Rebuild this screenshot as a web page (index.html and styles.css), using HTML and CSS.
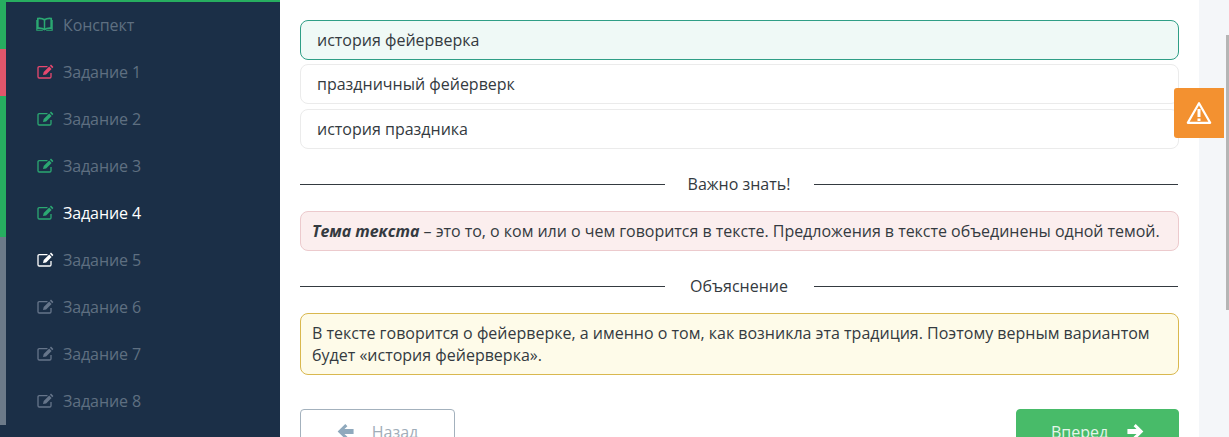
FILE: index.html
```html
<!DOCTYPE html>
<html lang="ru">
<head>
    <meta charset="UTF-8">
    <title>Задание 4</title>
    <link rel="stylesheet" href="styles.css">
</head>
<body>
    <svg class="icon-defs" width="0" height="0">
        <symbol id="icon-edit" viewBox="0 0 17 15">
            <path d="M10.500 2.700H2.300C1.500 2.700 1 3.200 1 4v8.700c0 .8.500 1.300 1.300 1.300h10.400c.8 0 1.300-.5 1.300-1.300V9" fill="none" stroke="currentColor" stroke-width="1.300"/>
            <path d="M14 .6l2.400 2.400-1.100 1.200-2.400-2.400zM12.200 2.500l2.400 2.400-5.500 5.500-3.100.7.700-3.100z" fill="currentColor"/>
        </symbol>
        <symbol id="icon-book" viewBox="0 0 17 15">
            <path d="M1.800 1.500c2.700-.3 5 .1 6.700 1.300 1.700-1.200 4-1.600 6.700-1.300v9.700c-2.700-.3-5 .1-6.700 1.300-1.700-1.200-4-1.600-6.700-1.300z" fill="none" stroke="currentColor" stroke-width="1.700"/>
            <path d="M8.500 3v10" stroke="currentColor" stroke-width="1.500"/>
            <path d="M.8 3v10.200h6M16.200 3v10.200h-6" fill="none" stroke="currentColor" stroke-width="1.100"/>
        </symbol>
    </svg>

    <div class="page">
        <nav class="sidebar">
            <a class="nav-item done"><svg class="nav-icon nav-book"><use href="#icon-book"/></svg>Конспект</a>
            <a class="nav-item wrong"><svg class="nav-icon"><use href="#icon-edit"/></svg>Задание 1</a>
            <a class="nav-item done"><svg class="nav-icon"><use href="#icon-edit"/></svg>Задание 2</a>
            <a class="nav-item done"><svg class="nav-icon"><use href="#icon-edit"/></svg>Задание 3</a>
            <a class="nav-item done current"><svg class="nav-icon"><use href="#icon-edit"/></svg>Задание 4</a>
            <a class="nav-item next"><svg class="nav-icon"><use href="#icon-edit"/></svg>Задание 5</a>
            <a class="nav-item"><svg class="nav-icon"><use href="#icon-edit"/></svg>Задание 6</a>
            <a class="nav-item"><svg class="nav-icon"><use href="#icon-edit"/></svg>Задание 7</a>
            <a class="nav-item"><svg class="nav-icon"><use href="#icon-edit"/></svg>Задание 8</a>
        </nav>

        <main class="content">
            <div class="options">
                <div class="option selected">история фейерверка</div>
                <div class="option">праздничный фейерверк</div>
                <div class="option">история праздника</div>
            </div>

            <div class="divider"><span>Важно знать!</span></div>
            <div class="note note-pink"><b>Тема текста</b> – это то, о ком или о чем говорится в тексте. Предложения в тексте объединены одной темой.</div>

            <div class="divider"><span>Объяснение</span></div>
            <div class="note note-yellow">В тексте говорится о фейерверке, а именно о том, как возникла эта традиция. Поэтому верным вариантом будет «история фейерверка».</div>

            <div class="buttons">
                <button class="btn btn-back">
                    <svg class="btn-icon" viewBox="0 0 16 14"><path d="M7.800 0L.6 7l7.200 7 2-2L7 9.300h8.600V4.700H7L9.800 2z" fill="currentColor"/></svg>
                    Назад
                </button>
                <button class="btn btn-next">
                    Вперед
                    <svg class="btn-icon" viewBox="0 0 16 14"><path d="M8.200 0l7.200 7-7.200 7-2-2L9 9.300H.4V4.700H9L6.200 2z" fill="currentColor"/></svg>
                </button>
            </div>
        </main>

        <div class="gutter"><div class="scroll-thumb"></div></div>
    </div>

    <a class="report-btn">
        <svg width="26" height="24" viewBox="0 0 26 24"><path d="M13 2.200L1.800 21.800h22.400z" fill="none" stroke="#fff" stroke-width="2.200" stroke-linejoin="round"/><path d="M13 8v8M13 17.400v2.600" stroke="#fff" stroke-width="3"/></svg>
    </a>
</body>
</html>
```

FILE: styles.css
```css
html, body {
    margin: 0;
    height: 437px;
    overflow: hidden;
}

body {
    font-family: "Open Sans", sans-serif;
    font-size: 16px;
    color: #343a40;
    background: #fff;
    position: relative;
}

.icon-defs {
    display: block;
    height: 0;
}

.page {
    display: flex;
    height: 437px;
}

/* Sidebar */
.sidebar {
    width: 280px;
    flex: none;
    box-sizing: border-box;
    background: #1b2f47;
    border-top: 2px solid #27ae60;
}
.nav-item {
    display: flex;
    align-items: center;
    height: 47px;
    box-sizing: border-box;
    padding-left: 31px;
    padding-bottom: 2px;
    border-left: 6px solid #6c7a89;
    color: #5f6f81;
    font-size: 16px;
    letter-spacing: -0.1px;
}
.nav-icon {
    width: 17px;
    height: 15px;
    margin-right: 9px;
    color: #66758a;
}
.nav-book {
    margin-left: -1px;
    margin-right: 10px;
}
.nav-item.done {
    border-left-color: #27ae60;
}
.nav-item.done .nav-icon {
    color: #2ba872;
}
.nav-item.wrong {
    border-left-color: #e0566b;
}
.nav-item.wrong .nav-icon {
    color: #e8486f;
}
.nav-item.current {
    color: #fff;
}
.nav-item.next .nav-icon {
    color: #fff;
}

/* Main column */
.content {
    width: 919px;
    flex: none;
    box-sizing: border-box;
    padding: 20px 20px 0;
}
.options {
    display: flex;
    flex-direction: column;
    gap: 4px;
}
.option {
    height: 40px;
    box-sizing: border-box;
    display: flex;
    align-items: center;
    padding: 0 16px;
    border: 1px solid #ebebeb;
    border-radius: 8px;
}
.option:last-child {
    margin-top: 1px;
}
.option.selected {
    background: #eff9f6;
    border-color: #2f9e86;
}

.divider {
    display: flex;
    align-items: center;
    height: 22px;
    margin-top: 24px;
    padding-right: 1px;
}
.divider::before,
.divider::after {
    content: "";
    height: 1px;
    flex: 1;
    background: #343a40;
}
.divider span {
    width: 149px;
    text-align: center;
}

.note {
    box-sizing: border-box;
    padding: 8px 11px;
    margin-top: 16px;
    border: 1px solid;
    border-radius: 8px;
    line-height: 22px;
}
.note b {
    font-style: italic;
}
.note-pink {
    height: 40px;
    background: #fbeeee;
    border-color: #eccacd;
    letter-spacing: -0.03px;
}
.note-yellow {
    height: 62px;
    background: #fefbe9;
    border-color: #d9b84f;
}

.buttons {
    display: flex;
    justify-content: space-between;
    margin-top: 34px;
}
.btn {
    display: flex;
    align-items: center;
    justify-content: center;
    height: 48px;
    box-sizing: border-box;
    padding: 0 0 3px;
    border-radius: 4px;
    font-family: inherit;
    font-size: 16px;
}
.btn-icon {
    width: 17px;
    height: 15px;
}
.btn-back {
    width: 155px;
    gap: 18px;
    background: #fff;
    border: 1px solid #a3b1bd;
    color: #9fadb9;
}
.btn-back .btn-icon {
    color: #8fa9bd;
}
.btn-next {
    width: 163px;
    gap: 19px;
    background: #48bb69;
    border: 1px solid #48bb69;
    color: #e4f6ea;
}
.btn-next .btn-icon {
    color: #fff;
}

/* Right gutter with scrollbar */
.gutter {
    flex: 1;
    background: #f4f6f9;
    display: flex;
    justify-content: flex-end;
}
.scroll-thumb {
    width: 3px;
    height: 275px;
    margin-top: 35px;
    background: #b5b5b5;
}

.report-btn {
    position: absolute;
    left: 1174px;
    top: 88px;
    width: 50px;
    height: 50px;
    display: flex;
    align-items: center;
    justify-content: center;
    background: #f39130;
    border-radius: 3px 0 0 3px;
}
```
